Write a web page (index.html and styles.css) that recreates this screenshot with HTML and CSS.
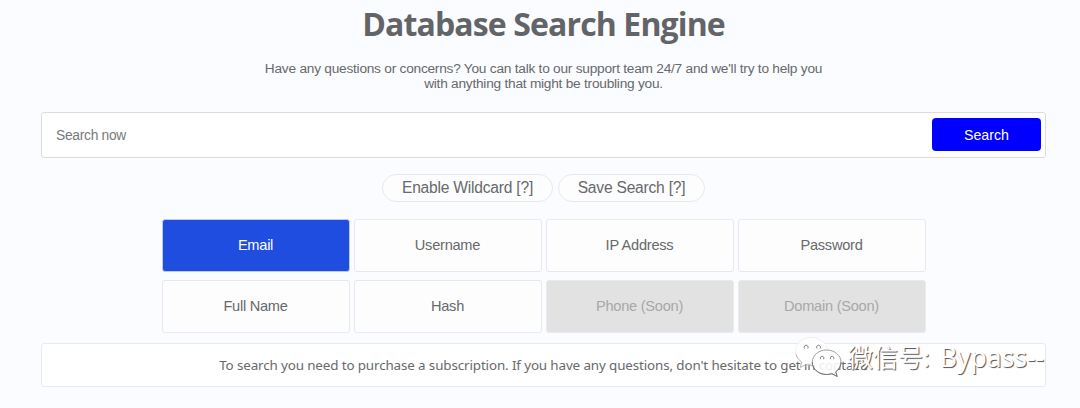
FILE: index.html
```html
<!DOCTYPE html>
<html lang="en">
<head>
<meta charset="utf-8">
<title>Database Search Engine</title>
<link rel="stylesheet" href="styles.css">
</head>
<body>
<main class="page">
  <h1 class="title"><span>Database Search Engine</span></h1>
  <p class="intro"><span>Have any questions or concerns? You can talk to our support team 24/7 and we'll try to help you</span><br><span>with anything that might be troubling you.</span></p>
  <form class="search">
    <input class="search-input" type="text" placeholder="Search now">
    <button class="search-button" type="button">Search</button>
  </form>
  <div class="options">
    <button class="pill pill-wildcard" type="button">Enable Wildcard [?]</button>
    <button class="pill pill-save" type="button">Save Search [?]</button>
  </div>
  <div class="types">
    <button class="type type-active" type="button">Email</button>
    <button class="type" type="button">Username</button>
    <button class="type" type="button">IP Address</button>
    <button class="type" type="button">Password</button>
    <button class="type" type="button">Full Name</button>
    <button class="type" type="button">Hash</button>
    <button class="type type-disabled" type="button" disabled>Phone (Soon)</button>
    <button class="type type-disabled" type="button" disabled>Domain (Soon)</button>
  </div>
  <div class="notice"><span>To search you need to purchase a subscription. If you have any questions, don't hesitate to get in contact.</span></div>
</main>
<div class="watermark">
  <svg class="wechat" width="50" height="44" viewBox="0 0 50 44">
    <path class="bubble" d="M17.500 2.500C8.500 2.500 1.500 8.700 1.500 16.300c0 4.300 2.300 8 5.800 10.700L6 32l5.700-3c2 .7 4 1 6.300 1C27 30 33.500 24 33.500 16.300S26.500 2.500 17.500 2.500Z"/>
    <path class="bubble-shadow" d="M2 19c.8 3.300 2.700 6 5.700 8L6.300 32.500l5.700-3c2 .6 4 .9 6 .9"/>
    <path class="bubble bubble-front" d="M32.500 15c-8 0-14.200 5.400-14.200 12.200s6.200 12.300 14.200 12.300c2 0 3.700-.3 5.300-.8l5.400 2.700-1.500-4.500c3.200-2.300 5.300-5.700 5.300-9.700C47 20.400 40.500 15 32.500 15Z"/>
    <path class="bubble-edge" d="M18.300 27.200c0 6.800 6.200 12.300 14.200 12.300 2 0 3.700-.3 5.300-.8l5.400 2.700-1.500-4.500c3.200-2.300 5.300-5.700 5.300-9.700"/>
    <path class="eyes" d="M10.600 13.500a2 2 0 1 1 3.100 0M23 13.500a2 2 0 1 1 3.100 0M26.700 24.200a1.800 1.800 0 1 1 2.800 0M36.700 24.200a1.800 1.800 0 1 1 2.800 0"/>
  </svg>
  <span class="watermark-label">微信号:</span>
  <span class="watermark-name">Bypass--</span>
</div>
</body>
</html>
```
FILE: styles.css
```css
* { box-sizing: border-box; }
body {
  margin: 0;
  height: 408px;
  overflow: hidden;
  background: #fbfcff;
  color: #67696c;
  font-family: "Liberation Sans", Arial, sans-serif;
}
.page { width: 1005px; margin-left: 41px; }
button, input { font-family: inherit; color: inherit; }
.title {
  margin: 0;
  height: 61px;
  padding-top: 2px;
  text-align: center;
  font: bold 32px/44px "Open Sans", sans-serif;
  letter-spacing: -.87px;
  color: #626467;
  white-space: nowrap;
}
.intro {
  margin: 0;
  height: 51px;
  text-align: center;
  font-size: 13.7px;
  letter-spacing: -.24px;
  line-height: 15px;
  white-space: nowrap;
}
.search {
  display: flex;
  align-items: center;
  height: 46px;
  padding: 0 4.500px 1px 14px;
  background: #fff;
  border: 1px solid #dcdcdc;
  border-radius: 3px;
}
.search-input {
  flex: 1;
  padding: 1px 0 0;
  border: 0;
  outline: 0;
  background: none;
  font-size: 13.8px;
  letter-spacing: -.28px;
}
.search-input::placeholder { color: #77797b; }
.search-button {
  width: 109px;
  height: 33px;
  padding: 0 0 0 1px;
  border: 0;
  border-radius: 4px;
  background: #00f;
  color: #fff;
  font-size: 14.2px;
}
.options {
  display: flex;
  justify-content: center;
  gap: 5px;
  margin-top: 16px;
}
.pill {
  height: 28px;
  padding: 0;
  border: 1px solid #e6e9ee;
  border-radius: 14px;
  background: #fdfdfe;
  font-size: 15.6px;
  letter-spacing: -.22px;
}
.pill-wildcard { width: 171px; }
.pill-save { width: 147px; }
.types {
  display: grid;
  grid-template-columns: repeat(4, 188px);
  justify-content: center;
  gap: 8px 4px;
  margin-top: 17px;
}
.type {
  height: 53px;
  padding: 0 0 1px;
  border: 1px solid #e6e9ee;
  border-radius: 3px;
  background: #fdfdfd;
  font-size: 14.6px;
  letter-spacing: -.25px;
}
.type-active {
  border-color: #bccaf4;
  background: #1f4de0;
  color: #fff;
}
.type-disabled {
  border-color: #e9eaeb;
  background: #e2e2e2;
  color: #a8a8a8;
}
.notice {
  height: 44px;
  margin-top: 10px;
  border: 1px solid #e8eaed;
  border-radius: 3px;
  background: #fff;
  text-align: center;
  font: 13.4px/43px "Noto Sans", sans-serif;
  letter-spacing: -.12px;
  white-space: nowrap;
}
/* The signature lies over the notice. */
.watermark {
  position: absolute;
  left: 794px;
  top: 335px;
  display: flex;
  white-space: nowrap;
  font: 25px/44px "Noto Sans", "Noto Sans CJK SC", sans-serif;
  color: #fff;
  text-shadow: 1px 1px .8px #555;
}
.wechat { display: block; }
.bubble { fill: #fff; fill-opacity: .88; stroke: #e4e4e4; stroke-width: .6; }
.bubble-front { stroke: #888; stroke-width: .8; }
.bubble-shadow { fill: none; stroke: #aaa; stroke-width: .8; }
.bubble-edge { fill: none; stroke: #777; stroke-width: 1; }
.eyes { fill: #fff; stroke: #777; stroke-width: .9; }
.watermark-label { margin-left: 4px; }
.watermark-name { margin-left: 10px; font-size: 26.5px; }
```
